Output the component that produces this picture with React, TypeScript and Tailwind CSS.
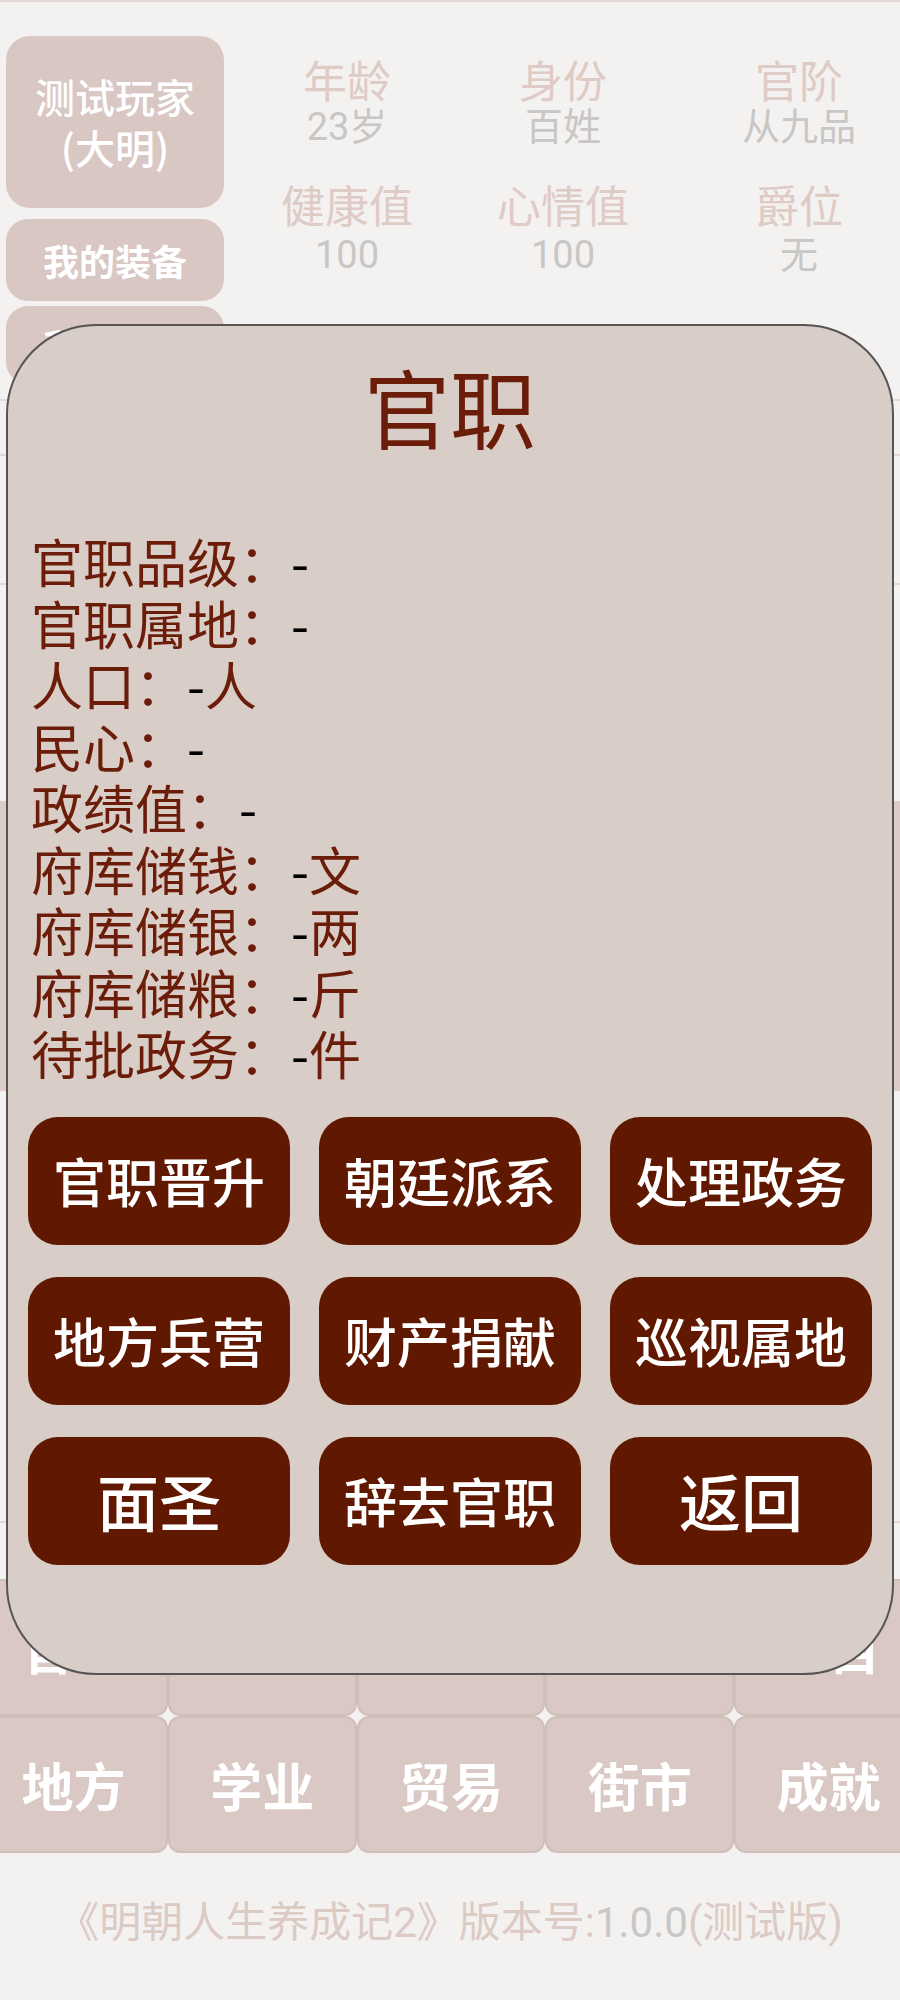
import React from "react";

const FONT = { fontFamily: '"Noto Sans CJK SC", "Noto Sans", sans-serif' };
const FONT_NUM = { fontFamily: 'Roboto, "Noto Sans CJK SC", sans-serif' };

const infoLines: [string, string][] = [
  ["官职品级：", ""],
  ["官职属地：", ""],
  ["人口：", "人"],
  ["民心：", ""],
  ["政绩值：", ""],
  ["府库储钱：", "文"],
  ["府库储银：", "两"],
  ["府库储粮：", "斤"],
  ["待批政务：", "件"],
];

const buttons = [
  "官职晋升",
  "朝廷派系",
  "处理政务",
  "地方兵营",
  "财产捐献",
  "巡视属地",
  "面圣",
  "辞去官职",
  "返回",
];

const navRow1 = ["官职", "家族", "人脉", "宅邸", "书目"];
const navRow2 = ["地方", "学业", "贸易", "街市", "成就"];

function Stat({ label, value, ml, vh }: { label: string; value: string; ml: string; vh: string }) {
  return (
    <div className={`w-[200px] flex flex-col items-center ${ml}`}>
      <div className="h-[48px] flex items-center text-[44px] leading-[48px] text-[#dfcbc6]">{label}</div>
      <div className={`flex items-end text-[38px] leading-[46px] text-[#c9c7c6] ${vh}`} style={FONT_NUM}>
        {value}
      </div>
    </div>
  );
}

export default function App() {
  return (
    <div className="relative w-[900px] min-h-[2000px] bg-[#f4f2f0] overflow-hidden" style={FONT}>
      <div className="h-[2px] bg-[#e4d8d4]" />
      {/* header */}
      <div className="flex pt-[34px] pl-[6px]">
        <div className="w-[218px] flex flex-col">
          <div className="h-[172px] rounded-[24px] bg-[#d9c7c3] flex flex-col items-center justify-center text-white text-[40px] leading-[51px] font-medium">
            <div>测试玩家</div>
            <div>(大明)</div>
          </div>
          <div className="mt-[11px] h-[82px] rounded-[22px] bg-[#d9c7c3] flex items-center justify-center text-white text-[36px] font-semibold">
            我的装备
          </div>
          <div className="mt-[5px] h-[78px] rounded-[22px] bg-[#d9c7c3] flex items-center justify-center text-white text-[36px] font-semibold">
            我的属性
          </div>
        </div>
        <div className="flex flex-col pt-[19px] gap-[30px]">
          <div className="flex">
            <Stat label="年龄" value="23岁" ml="ml-[23px]" vh="h-[47px]" />
            <Stat label="身份" value="百姓" ml="ml-[16px]" vh="h-[47px]" />
            <Stat label="官阶" value="从九品" ml="ml-[36px]" vh="h-[47px]" />
          </div>
          <div className="flex">
            <Stat label="健康值" value="100" ml="ml-[23px]" vh="h-[50px]" />
            <Stat label="心情值" value="100" ml="ml-[16px]" vh="h-[50px]" />
            <Stat label="爵位" value="无" ml="ml-[36px]" vh="h-[50px]" />
          </div>
        </div>
      </div>
      {/* hidden middle content */}
      <div className="h-[1195px] flex flex-col">
        <div className="h-[15px]" />
        <div className="h-[2px] bg-[#e6d8d4]" />
        <div className="h-[53px]" />
        <div className="h-[2px] bg-[#e6d8d4]" />
        <div className="h-[127px]" />
        <div className="h-[2px] bg-[#e6d8d4]" />
        <div className="h-[216px]" />
        <div className="h-[290px] bg-[#dccbc7]" />
        <div className="h-[430px]" />
        <div className="h-[2px] bg-[#e6d8d4]" />
      </div>
      {/* nav */}
      <div className="w-[944px] -ml-[21px] flex flex-col">
        {[navRow1, navRow2].map((row, ri) => (
          <div key={ri} className="grid grid-cols-5 h-[137px]">
            {row.map((t) => (
              <div
                key={t}
                className="rounded-[12px] border-2 border-[#cfbfbb] bg-[#d9c8c4] flex items-center justify-center text-white text-[52px] font-semibold"
              >
                {t}
              </div>
            ))}
          </div>
        ))}
      </div>
      {/* footer */}
      <div className="mt-[45px] text-center text-[42px] leading-[50px] text-[#dccac5]" style={FONT_NUM}>
        《明朝人生养成记2》版本号:<span className="text-[#c9c7c6]">1.0.0</span>(测试版)
      </div>

      {/* modal */}
      <div className="absolute left-[6px] top-[324px] w-[888px] h-[1351px] rounded-[90px] border-2 border-[#555555] bg-[#d8cdc7] flex flex-col">
        <div className="mt-[30px] h-[100px] leading-[100px] text-center text-[86px] text-[#6b1d0a]">官职</div>
        <div className="mt-[74px] pl-[23px] flex flex-col text-[52px] leading-[61.5px] text-[#6b1d0a]">
          {infoLines.map(([label, unit]) => (
            <div key={label}>
              {label}
              <span className="text-black">-</span>
              {unit}
            </div>
          ))}
        </div>
        <div className="mt-[33px] px-[20px] grid grid-cols-3 gap-x-[29px] gap-y-[32px]">
          {buttons.map((b) => (
            <div
              key={b}
              className={`h-[128px] rounded-[30px] bg-[#601800] flex items-center justify-center text-white font-medium ${
                b.length === 2 ? "text-[62px]" : "text-[53px]"
              }`}
            >
              {b}
            </div>
          ))}
        </div>
      </div>
    </div>
  );
}
